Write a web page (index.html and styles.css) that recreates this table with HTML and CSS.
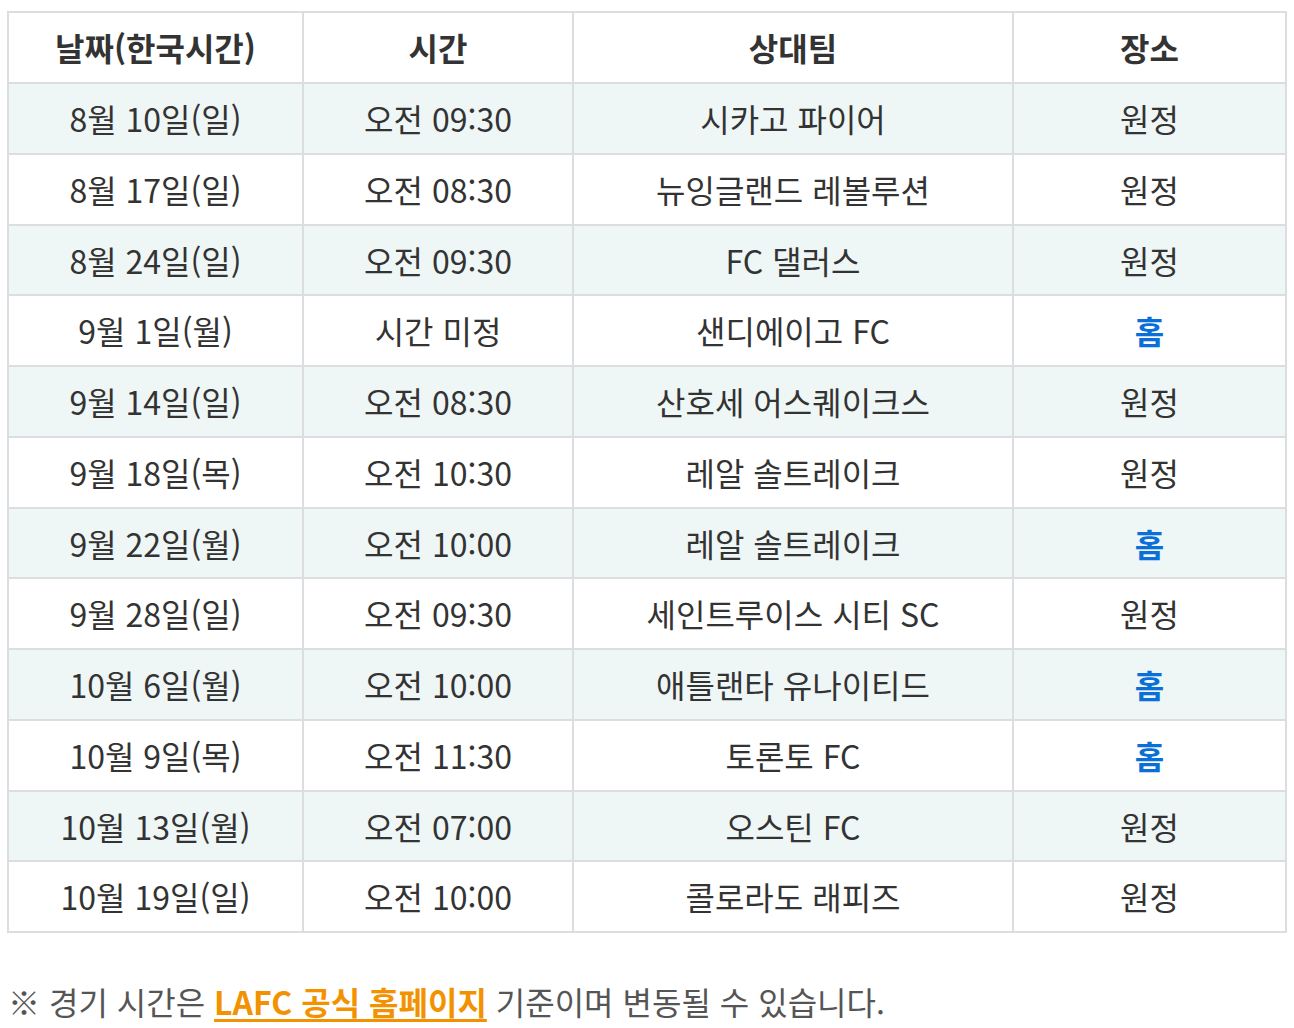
FILE: index.html
```html
<!DOCTYPE html>
<html lang="ko">
<head>
<meta charset="utf-8">
<link rel="stylesheet" href="styles.css">
</head>
<body>
<table class="schedule">
  <colgroup>
    <col class="c-date"><col class="c-time"><col class="c-team"><col class="c-place">
  </colgroup>
  <thead>
    <tr><th>날짜(한국시간)</th><th>시간</th><th>상대팀</th><th>장소</th></tr>
  </thead>
  <tbody>
    <tr><td>8월 10일(일)</td><td>오전 09:30</td><td>시카고 파이어</td><td>원정</td></tr>
    <tr><td>8월 17일(일)</td><td>오전 08:30</td><td>뉴잉글랜드 레볼루션</td><td>원정</td></tr>
    <tr><td>8월 24일(일)</td><td>오전 09:30</td><td>FC 댈러스</td><td>원정</td></tr>
    <tr><td>9월 1일(월)</td><td>시간 미정</td><td>샌디에이고 FC</td><td class="home">홈</td></tr>
    <tr><td>9월 14일(일)</td><td>오전 08:30</td><td>산호세 어스퀘이크스</td><td>원정</td></tr>
    <tr><td>9월 18일(목)</td><td>오전 10:30</td><td>레알 솔트레이크</td><td>원정</td></tr>
    <tr><td>9월 22일(월)</td><td>오전 10:00</td><td>레알 솔트레이크</td><td class="home">홈</td></tr>
    <tr><td>9월 28일(일)</td><td>오전 09:30</td><td>세인트루이스 시티 SC</td><td>원정</td></tr>
    <tr><td>10월 6일(월)</td><td>오전 10:00</td><td>애틀랜타 유나이티드</td><td class="home">홈</td></tr>
    <tr><td>10월 9일(목)</td><td>오전 11:30</td><td>토론토 FC</td><td class="home">홈</td></tr>
    <tr><td>10월 13일(월)</td><td>오전 07:00</td><td>오스틴 FC</td><td>원정</td></tr>
    <tr><td>10월 19일(일)</td><td>오전 10:00</td><td>콜로라도 래피즈</td><td>원정</td></tr>
  </tbody>
</table>
<p class="note">※ 경기 시간은 <a class="link" href="#">LAFC 공식 홈페이지</a> 기준이며 변동될 수 있습니다.</p>
</body>
</html>
```
FILE: styles.css
```css
body {
  margin: 0;
  padding: 11px 7px 0 7px;
  background: #ffffff;
  font-family: "Noto Sans CJK KR", "Noto Sans", sans-serif;
  color: #333333;
}
.schedule {
  width: 1278px;
  border-collapse: collapse;
  border: 2px solid #dcdde1;
  font-size: 32px;
  table-layout: fixed;
}
.c-date { width: 295px; }
.c-time { width: 270px; }
.c-team { width: 440px; }
.c-place { width: 273px; }
.schedule th,
.schedule td {
  border: 2px solid #dcdde1;
  text-align: center;
  padding: 12px 8px;
  line-height: 44.75px;
  font-weight: 400;
}
.schedule th {
  font-weight: 700;
  padding: 12px 8px;
  line-height: 45px;
}
.schedule tbody tr:nth-child(odd) td {
  background: #eff6f6;
}
.schedule td.home {
  color: #0a6fd6;
  font-weight: 700;
}
.note {
  margin: 46px 0 0 1px;
  font-size: 32px;
  line-height: 44px;
  color: #555555;
}
.link {
  color: #f39200;
  font-weight: 700;
  text-decoration: underline;
  text-underline-offset: 4px;
}
```
